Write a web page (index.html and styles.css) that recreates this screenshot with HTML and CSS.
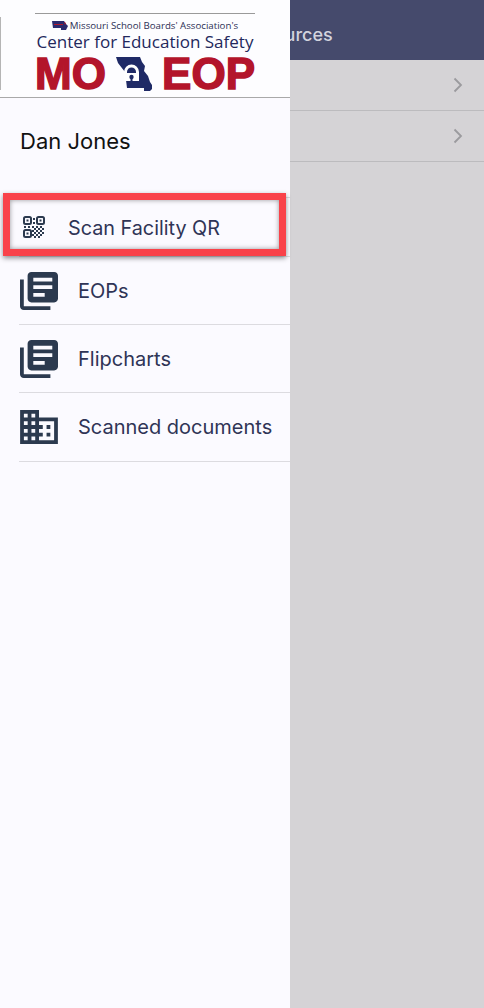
FILE: index.html
```html
<!DOCTYPE html>
<html lang="en">
<head>
    <meta charset="UTF-8">
    <meta name="viewport" content="width=device-width, initial-scale=1.0">
    <title>MO EOP</title>
    <link rel="stylesheet" href="styles.css">
</head>
<body>
    <div class="screen">
        <main class="content">
            <header class="content-header">Resources</header>
            <div class="list-row">
                <svg class="chevron" viewBox="0 0 10 16"><path d="M1.500 1.500 8 8l-6.500 6.500"/></svg>
            </div>
            <div class="list-row">
                <svg class="chevron" viewBox="0 0 10 16"><path d="M1.500 1.500 8 8l-6.500 6.500"/></svg>
            </div>
        </main>

        <aside class="drawer">
            <div class="logo-area">
                <div class="logo">
                    <div class="logo-assoc">
                        <svg class="logo-mini" viewBox="0 0 16 10"><path fill="#2b2a6e" d="M0 1h12l2 3 2 2-2 4H9V8H1z"/><path fill="#b0182c" d="M2 4h9v1H2zM12 2l2 1-1 2z"/></svg>
                        <span>Missouri School Boards' Association's</span>
                    </div>
                    <div class="logo-center">Center for Education Safety</div>
                    <div class="logo-mark">
                        <span>MO</span>
                        <svg class="logo-state" viewBox="0 0 36 34">
                            <path fill="#1f2a66" d="M0 0h24l2 5 3 4-1 5 4 5 2 6 2 3v4l-2 2h-6v-3H11L9 15 2 6z"/>
                            <path fill="#fff" d="M8 24V15a7.500 7.500 0 0 1 15 0v9z"/>
                            <path fill="#1f2a66" d="M11 16v-1a4.500 4.500 0 0 1 9 0v1z"/>
                            <circle cx="15.500" cy="20" r="2.200" fill="#1f2a66"/>
                            <rect x="14.500" y="20" width="2" height="6" fill="#1f2a66"/>
                        </svg>
                        <span>EOP</span>
                    </div>
                </div>
            </div>

            <div class="user-name">Dan Jones</div>

            <nav class="menu">
                <a class="menu-item menu-item-scan">
                    <svg class="icon-qr" viewBox="0 0 22 22">
                        <g fill="none" stroke="#2c3a4f" stroke-width="2">
                            <rect x="1" y="1" width="7" height="7" rx="1.500"/>
                            <rect x="14" y="1" width="7" height="7" rx="1.500"/>
                            <rect x="1" y="14" width="7" height="7" rx="1.500"/>
                        </g>
                        <g fill="#2c3a4f">
                            <rect x="3.500" y="3.500" width="2" height="2"/>
                            <rect x="16.500" y="3.500" width="2" height="2"/>
                            <rect x="3.500" y="16.500" width="2" height="2"/>
                            <rect x="10" y="2" width="2" height="2"/>
                            <rect x="10" y="6" width="2" height="2"/>
                            <rect x="1" y="10" width="2" height="2"/>
                            <rect x="5" y="10" width="2" height="2"/>
                            <rect x="9" y="10" width="2" height="2"/>
                            <rect x="13" y="10" width="2" height="2"/>
                            <rect x="17" y="10" width="2" height="2"/>
                            <rect x="11" y="12" width="2" height="2"/>
                            <rect x="15" y="12" width="2" height="2"/>
                            <rect x="19" y="12" width="2" height="2"/>
                            <rect x="9" y="14" width="2" height="2"/>
                            <rect x="13" y="14" width="2" height="2"/>
                            <rect x="17" y="14" width="2" height="2"/>
                            <rect x="11" y="16" width="2" height="2"/>
                            <rect x="15" y="16" width="2" height="2"/>
                            <rect x="19" y="16" width="2" height="2"/>
                            <rect x="9" y="18" width="2" height="2"/>
                            <rect x="13" y="18" width="2" height="2"/>
                            <rect x="17" y="18" width="2" height="2"/>
                            <rect x="11" y="20" width="2" height="2"/>
                            <rect x="15" y="20" width="2" height="2"/>
                        </g>
                    </svg>
                    <span>Scan Facility QR</span>
                    <div class="highlight"></div>
                </a>
                <a class="menu-item">
                    <svg class="icon" viewBox="2 2 20 20"><path d="M4 6H2v14c0 1.100.9 2 2 2h14v-2H4V6zm16-4H8c-1.100 0-2 .9-2 2v12c0 1.100.9 2 2 2h12c1.100 0 2-.9 2-2V4c0-1.100-.9-2-2-2zm-1 9H9V9h10v2zm-4 4H9v-2h6v2zm4-8H9V5h10v2z"/></svg>
                    <span>EOPs</span>
                </a>
                <a class="menu-item">
                    <svg class="icon" viewBox="2 2 20 20"><path d="M4 6H2v14c0 1.100.9 2 2 2h14v-2H4V6zm16-4H8c-1.100 0-2 .9-2 2v12c0 1.100.9 2 2 2h12c1.100 0 2-.9 2-2V4c0-1.100-.9-2-2-2zm-1 9H9V9h10v2zm-4 4H9v-2h6v2zm4-8H9V5h10v2z"/></svg>
                    <span>Flipcharts</span>
                </a>
                <a class="menu-item menu-item-last">
                    <svg class="icon icon-domain" viewBox="2 3 20 18"><path d="M12 7V3H2v18h20V7H12zM6 19H4v-2h2v2zm0-4H4v-2h2v2zm0-4H4V9h2v2zm0-4H4V5h2v2zm4 12H8v-2h2v2zm0-4H8v-2h2v2zm0-4H8V9h2v2zm0-4H8V5h2v2zm10 12h-8v-2h2v-2h-2v-2h2v-2h-2V9h8v10zm-2-8h-2v2h2v-2zm0 4h-2v2h2v-2z"/></svg>
                    <span>Scanned documents</span>
                </a>
            </nav>
        </aside>
    </div>
</body>
</html>
```

FILE: styles.css
```css
html, body {
    margin: 0;
    padding: 0;
}

body {
    font-family: 'Inter', 'Roboto', sans-serif;
}

.screen {
    position: relative;
    width: 484px;
    height: 1008px;
    overflow: hidden;
    background-color: #d5d3d6;
}

/* panel behind the drawer */
.content-header {
    height: 60px;
    box-sizing: border-box;
    padding: 24px 0 0 242px;
    background-color: #454a6c;
    color: #d3d4de;
    font-size: 18px;
    font-weight: 500;
    line-height: 22px;
}

.list-row {
    height: 51px;
    box-sizing: border-box;
    display: flex;
    align-items: center;
    justify-content: flex-end;
    padding-right: 21px;
    border-bottom: 1px solid #bcbbbe;
}

.chevron {
    width: 10px;
    height: 16px;
    fill: none;
    stroke: #9b9a9e;
    stroke-width: 1.800;
}

/* drawer */
.drawer {
    position: absolute;
    top: 0;
    left: 0;
    bottom: 0;
    width: 290px;
    background-color: #fbfaff;
}

.logo-area {
    height: 98px;
    box-sizing: border-box;
    padding-top: 13px;
    background-color: #fdfdff;
    border-bottom: 1px solid #a9a9a9;
}

/* thin edge of the logo image */
.logo-area::before {
    content: "";
    position: absolute;
    top: 17px;
    left: 0;
    width: 1px;
    height: 73px;
    background-color: #b5b5b5;
}

.logo {
    width: 220px;
    margin-left: 35px;
    border-top: 1px solid #9a9a9a;
    text-align: center;
}

.logo-assoc {
    display: flex;
    align-items: center;
    justify-content: center;
    gap: 2px;
    margin-top: 4px;
    height: 14px;
    color: #2c2f55;
    font-family: 'Open Sans', sans-serif;
    font-size: 9.700px;
    white-space: nowrap;
}

.logo-mini {
    width: 16px;
    height: 10px;
}

.logo-center {
    margin-top: 0;
    margin-left: -4px;
    margin-right: -4px;
    height: 20px;
    color: #23285c;
    font-family: 'Open Sans', sans-serif;
    font-size: 17px;
    line-height: 20px;
    white-space: nowrap;
}

.logo-mark {
    display: flex;
    align-items: center;
    justify-content: space-between;
    height: 34px;
    margin-top: 5px;
    color: #b3152b;
    font-family: 'Liberation Sans', sans-serif;
    font-size: 44px;
    font-weight: 700;
    line-height: 34px;
    -webkit-text-stroke: 1.500px #b3152b;
}

.logo-state {
    width: 36px;
    height: 34px;
}

.user-name {
    padding: 31px 0 0 20px;
    height: 68px;
    color: #111111;
    font-size: 22px;
    line-height: 24px;
}

.menu {
    margin-left: 19px;
    border-top: 1px solid #dcdbe0;
}

.menu-item {
    display: flex;
    align-items: center;
    gap: 20px;
    height: 68px;
    box-sizing: border-box;
    padding-left: 1px;
    border-bottom: 1px solid #dcdbe0;
    color: #2f3456;
    font-size: 20px;
}

.menu-item-last {
    height: 69px;
}

.menu-item-scan {
    position: relative;
    height: 59px;
    gap: 23px;
    padding-left: 4px;
    font-size: 19.800px;
}

.menu-item-scan span {
    position: relative;
    top: 1px;
}

.highlight {
    position: absolute;
    top: -5px;
    left: -16px;
    width: 283px;
    height: 63px;
    box-sizing: border-box;
    border: 7px solid #f9424a;
    box-shadow: 0 2px 5px rgba(0, 0, 0, 0.45), inset 0 0 5px rgba(0, 0, 0, 0.4);
}

.icon {
    width: 38px;
    height: 38px;
    flex-shrink: 0;
    fill: #2c3a4f;
}

.icon-domain {
    height: 34px;
}

.icon-qr {
    width: 22px;
    height: 22px;
    flex-shrink: 0;
}
```
